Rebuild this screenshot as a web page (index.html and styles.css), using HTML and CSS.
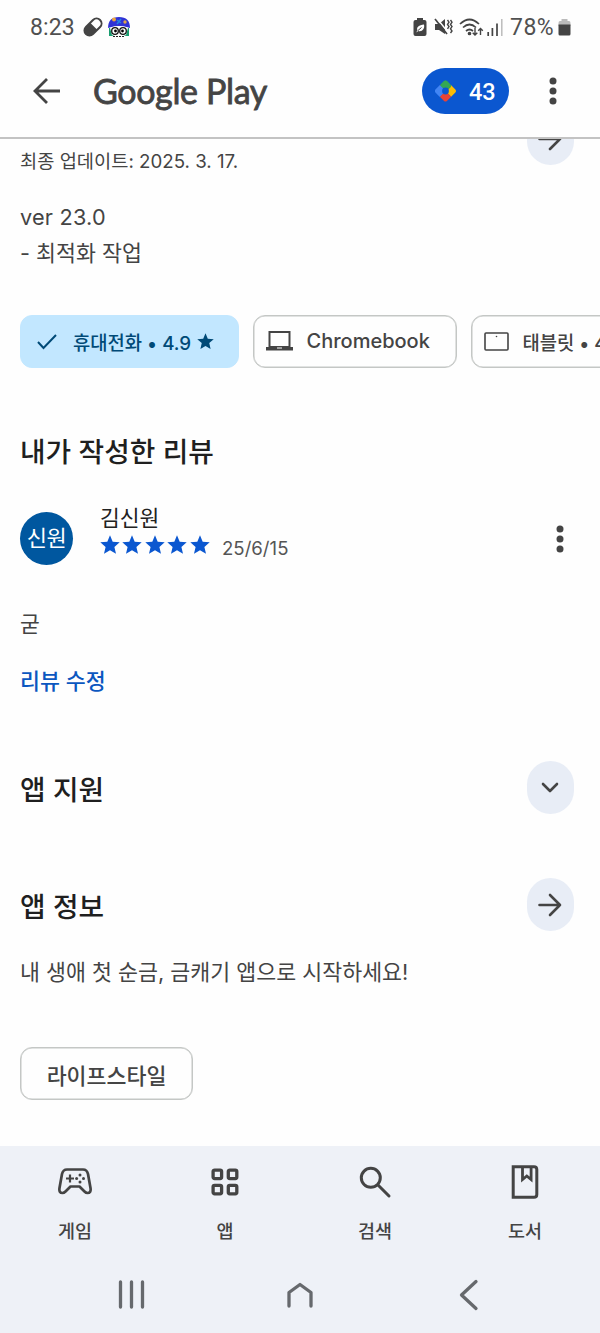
FILE: index.html
```html
<!DOCTYPE html>
<html lang="ko">
<head>
<meta charset="utf-8">
<title>Google Play</title>
<link rel="stylesheet" href="styles.css">
</head>
<body>
<svg width="0" height="0" class="defs">
  <symbol id="star" viewBox="0 0 20 20"><path d="M10 .2l2.700 6.500 7 .6-5.300 4.600 1.600 6.900L10 15.200l-6 3.600 1.600-6.900L.3 7.300l7-.6z"/></symbol>
</svg>
<div class="screen">
  <div class="status">
    <span class="time">8:23</span>
    <svg class="pill" width="22" height="22" viewBox="0 0 22 22"><g transform="rotate(45 11 11)"><rect x="6" y="1" width="10" height="20" rx="5" fill="#fff" stroke="#444" stroke-width="2"/><path d="M6 10h10v6a5 5 0 0 1-10 0z" fill="#444"/></g></svg>
    <svg class="face" width="24" height="22" viewBox="0 0 24 22"><path d="M2 12h20v8H2z" fill="#199d70"/><path d="M1 12Q1 1 12 1t11 11q-11-4-22 0z" fill="#3033d5"/><circle cx="7" cy="3.500" r="2" fill="#eca642"/><circle cx="18" cy="6" r="1.700" fill="#dda54b"/><path d="M10 4l4 3M14 3l-4 5" stroke="#2384e5" stroke-width="1.500"/><path d="M3 12q9-4 18 0l-2 7q-7 4-14 0z" fill="#fff"/><circle cx="8" cy="15" r="3.300" fill="#fff" stroke="#111" stroke-width="1.300"/><circle cx="16" cy="15" r="3.300" fill="#fff" stroke="#111" stroke-width="1.300"/><circle cx="8.500" cy="15" r="1.400"/><circle cx="15.500" cy="15" r="1.400"/><path d="M6 20.500h12" stroke="#222" stroke-dasharray="2 1"/></svg>
    <span class="grow"></span>
    <svg width="14" height="18" viewBox="0 0 14 18"><path d="M4 0h6v2h1.500q2 0 2 2v12q0 2-2 2h-9q-2 0-2-2V4q0-2 2-2H4z" fill="#444"/><path d="M3 14.500l1.500-2C3 9 6 7 11 6.500 12 11 9 14 5.500 13z" fill="#fff"/><path d="M5 12.500l3.500-3" stroke="#444"/></svg>
    <svg class="mute" width="19" height="19" viewBox="0 0 19 19"><path d="M1 6h4l6-5v15l-6-4H1z" fill="#444"/><path d="M2.500 0l13 16" stroke="#fff" stroke-width="1.500"/><path d="M1 1l12 15" stroke="#444" stroke-width="1.700"/><path d="M13.500 2l1.500 2.200-1.500 2.200L15 8.600l-1.500 2.200m3-8.800L18 4.200l-1.500 2.200L18 8.600l-1.500 2.200L18 13l-1.500 2" fill="none" stroke="#444" stroke-width="1.400"/></svg>
    <svg class="wifi" width="25" height="19" viewBox="0 0 25 19" fill="none" stroke="#444" stroke-width="1.700"><path d="M1 6q9.500-9 19 0M4 9.500q6.500-6 13 0M7 13q3.500-3 7 0"/><circle cx="10.500" cy="15.500" r="1" fill="#444"/><path d="M16 10v7m-2.300-2.300L16 17l2.300-2.300M21.500 17v-6.500m-2.300 2.300l2.300-2.300 2.300 2.300" stroke-width="1.400"/></svg>
    <svg class="signal" width="16" height="17" viewBox="0 0 16 17"><path d="M1.200 17v-4M5.400 17V9M10 17V4.500" stroke="#444" stroke-width="1.700"/><path d="M14.800 17V0" stroke="#bbb" stroke-width="1.500"/></svg>
    <span class="pct">78%</span>
    <svg width="13" height="17" viewBox="0 0 13 17"><path d="M3.500 0h6v2H11q1.500 0 1.500 2v3H.5V4Q.5 2 2 2h1.500z" fill="#bbb"/><path d="M.5 5.500h12V15q0 1.500-1.500 1.500H2Q.5 16.500.5 15z" fill="#444"/></svg>
  </div>
  <header class="header">
    <svg class="back" width="28" height="28" viewBox="0 0 28 28" fill="none" stroke="#444" stroke-width="2.800"><path d="M27 14H2M14 2L2 14l12 12"/></svg>
    <h1 class="brand">Google Play</h1>
    <span class="grow"></span>
    <div class="points">
      <svg width="23" height="24" viewBox="0 0 23 24"><g transform="translate(11.500 12) rotate(45)"><path d="M-8 0v-6q0-2 2-2h6v8z" fill="#34a853"/><path d="M0-8h6q2 0 2 2v6H0z" fill="#fbbc04"/><path d="M-8 0h8v8h-6q-2 0-2-2z" fill="#4285f4"/><path d="M0 0h8v6q0 2-2 2H0z" fill="#ea4335"/><path d="M-8 0v-6q0-2 2-2h6v8z" fill="#4285f4" transform="rotate(-90)"/><path d="M-8-1v-5q0-2 2-2h5q2 0 2 2v3h-6q-2 0-2 2z" fill="#34a853"/></g><circle cx="11.500" cy="12" r="3.400" fill="#0b57d0"/></svg>
      <span>43</span>
    </div>
    <svg class="more" width="8" height="28" viewBox="0 0 8 28" fill="#444"><circle cx="4" cy="4" r="3.500"/><circle cx="4" cy="14" r="3.500"/><circle cx="4" cy="24" r="3.500"/></svg>
  </header>
  <main class="content">
    <div class="updated">
      <p class="date">최종 업데이트: 2025. 3. 17.</p>
      <div class="round"><svg width="24" height="24" viewBox="0 0 24 24" class="arrow"><path d="M1.500 12H22M12 2l10 10-10 10"/></svg></div>
    </div>
    <div class="notes"><p class="ver">ver 23.0</p><p class="opt">- 최적화 작업</p></div>
    <div class="chips">
      <div class="chip selected"><svg width="20" height="16" viewBox="0 0 20 16" fill="none" stroke="#004a77" stroke-width="2"><path d="M1 8l5.500 6L19 1"/></svg><span class="phone">휴대전화 • 4.9</span><svg class="ministar" width="17" height="17" viewBox="0 0 20 20"><use href="#star" width="20" height="20"/></svg></div>
      <div class="chip chrome"><svg width="27" height="20" viewBox="0 0 27 20"><path d="M3.500 1h20v15h-20z" fill="none" stroke="#444" stroke-width="2"/><path d="M0 16h27v3.500H0z" fill="#444"/><path d="M11 17h5" stroke="#fff"/></svg><span>Chromebook</span></div>
      <div class="chip tablet"><svg width="25" height="19" viewBox="0 0 25 19"><rect x="1" y="1" width="23" height="17" rx="1" fill="none" stroke="#444" stroke-width="1.600"/><circle cx="12.500" cy="4.500" r=".8" fill="#444"/></svg><span>태블릿 • 4.7</span></div>
    </div>
    <h2 class="mine">내가 작성한 리뷰</h2>
    <div class="review">
      <div class="avatar">신원</div>
      <div class="who">
        <p class="name">김신원</p>
        <div class="rating"><svg width="20" height="20" viewBox="0 0 20 20"><use href="#star"/></svg><svg width="20" height="20" viewBox="0 0 20 20"><use href="#star"/></svg><svg width="20" height="20" viewBox="0 0 20 20"><use href="#star"/></svg><svg width="20" height="20" viewBox="0 0 20 20"><use href="#star"/></svg><svg width="20" height="20" viewBox="0 0 20 20"><use href="#star"/></svg><span>25/6/15</span></div>
      </div>
      <svg class="more" width="8" height="28" viewBox="0 0 8 28" fill="#444"><circle cx="4" cy="4" r="3.500"/><circle cx="4" cy="14" r="3.500"/><circle cx="4" cy="24" r="3.500"/></svg>
    </div>
    <p class="comment">굳</p>
    <a class="edit">리뷰 수정</a>
    <div class="section support"><h2>앱 지원</h2><div class="round"><svg width="18" height="12" viewBox="0 0 18 12" class="arrow"><path d="M2 2l7 7 7-7"/></svg></div></div>
    <div class="section about"><h2>앱 정보</h2><div class="round"><svg width="24" height="24" viewBox="0 0 24 24" class="arrow"><path d="M1.500 12H22M12 2l10 10-10 10"/></svg></div></div>
    <p class="desc">내 생애 첫 순금, 금캐기 앱으로 시작하세요!</p>
    <div class="chip tag">라이프스타일</div>
  </main>
  <footer class="bottom">
    <nav class="tabs">
      <div class="tab"><svg width="34" height="34" viewBox="0 0 34 34" fill="none" stroke="#444" stroke-width="2.700" stroke-linejoin="round"><path d="M9 4.500h16Q29 4.500 30 9l2.500 14q.8 5-3 5-1.500 0-3-1.500L21.500 21.500h-9l-5 5Q6 28 4.500 28q-3.800 0-3-5L4 9q1-4.500 5-4.500z"/><path d="M12 9.500v8M8 13.500h8" stroke-width="2.200"/><g fill="#444" stroke="none"><circle cx="22" cy="10" r="1.500"/><circle cx="22" cy="17" r="1.500"/><circle cx="18.600" cy="13.500" r="1.500"/><circle cx="25.500" cy="13.500" r="1.500"/></g></svg><span>게임</span></div>
      <div class="tab"><svg width="34" height="34" viewBox="0 0 34 34" fill="none" stroke="#444" stroke-width="3.300"><rect x="5.100" y="5.100" width="8.500" height="8.500" rx="1.500"/><rect x="20.300" y="5.100" width="8.500" height="8.500" rx="1.500"/><rect x="5.100" y="20.300" width="8.500" height="8.500" rx="1.500"/><rect x="20.300" y="20.300" width="8.500" height="8.500" rx="1.500"/></svg><span>앱</span></div>
      <div class="tab"><svg width="34" height="34" viewBox="0 0 34 34" fill="none" stroke="#444" stroke-width="3" stroke-linecap="round"><circle cx="12.800" cy="12.800" r="9.500"/><path d="M20 20l11 11"/></svg><span>검색</span></div>
      <div class="tab"><svg width="34" height="34" viewBox="0 0 34 34" fill="none" stroke="#444" stroke-width="3"><path d="M5.200 1.800H26q2.800 0 2.800 2.800v24.800q0 2.800-2.800 2.800H5.200z"/><path d="M14.500 2v12.500l4.300-3.500 4.300 3.500V2" stroke-width="2.800"/></svg><span>도서</span></div>
    </nav>
    <div class="system">
      <svg width="28" height="32" viewBox="0 0 28 32"><path d="M2.500 3v25M13.500 3v25M24.500 3v25"/></svg>
      <svg width="28" height="32" viewBox="0 0 28 32"><path d="M3 27V13.500L14 5.500l11 8V27"/></svg>
      <svg width="28" height="32" viewBox="0 0 28 32"><path d="M22 2.500L7.500 16 22 29.500"/></svg>
    </div>
  </footer>
</div>
</body>
</html>
```
FILE: styles.css
```css
* { box-sizing: border-box; }
body { margin: 0; background: #fefefe; color: #444; font-family: Inter, "Noto Sans CJK KR", sans-serif; }
p, h1, h2 { margin: 0; font-weight: 400; white-space: nowrap; }
svg { display: block; flex: none; }
.defs { display: none; }
.grow { flex: 1; }
.screen { width: 600px; height: 1333px; display: flex; flex-direction: column; overflow: hidden; }
.status { height: 54px; display: flex; align-items: center; padding: 0 29px 0 30px; font-family: Roboto, sans-serif; font-size: 23px; color: #505050; }
.status .pill { margin-left: 7px; }
.status .face { margin-left: 3px; }
.time { letter-spacing: 0.1px; }
.mute { margin-left: 7px; }
.wifi { margin-left: 6px; }
.signal { margin-left: 3px; }
.pct { margin: 0 4px 0 7px; letter-spacing: 0.4px; }
.header { height: 85px; flex: none; display: flex; align-items: center; padding: 0 43px 9px 33px; border-bottom: 2px solid #c3c3c3; }
.brand { margin-left: 32px; font: 400 34px/44px Lato, sans-serif; letter-spacing: -0.35px; -webkit-text-stroke: 0.8px #444; }
.points { width: 87px; height: 46px; border-radius: 23px; background: #0b57d0; color: #fff; display: flex; align-items: center; padding-left: 12px; gap: 12px; font: 500 23.5px/46px Roboto, sans-serif; }
.points span { padding-top: 1px; }
.header .more { margin-left: 40px; }
.content { flex: 1; padding: 0 26.5px 0 20px; }
.updated { height: 38px; display: flex; justify-content: space-between; align-items: flex-start; overflow: hidden; }
.date { font-size: 18.7px; line-height: 30px; margin-top: 8px; }
.round { width: 47px; height: 53px; border-radius: 23.5px; background: #e8edf6; display: flex; align-items: center; justify-content: center; flex: none; }
.updated .round { margin-top: -27px; }
.arrow { fill: none; stroke: #444; stroke-width: 2.6; stroke-linecap: round; stroke-linejoin: round; }
.notes { margin-top: 22px; font-size: 21.7px; line-height: 36px; }
.ver { letter-spacing: 0.2px; }
.chips { margin: 44px -26.5px 0 0; display: flex; gap: 14px; overflow: hidden; }
.chip { height: 53px; border: 1.6px solid #c4c7c5; box-shadow: inset 0 0 0 0.5px #c4c7c5; border-radius: 12px; display: flex; align-items: center; flex: none; white-space: nowrap; font-size: 20px; font-weight: 500; }
.selected { width: 218.5px; background: #c2e7ff; border-color: #c2e7ff; box-shadow: none; color: #004a77; padding-left: 16px; font-size: 18.8px; }
.phone { margin-left: 16px; }
.ministar { margin-left: 6px; fill: #004a77; }
.chrome { width: 204px; padding-left: 12px; gap: 14px; padding-bottom: 2px; }
.tablet { width: 210px; padding-left: 12px; gap: 14px; font-size: 18.8px; }
h2 { font-size: 27.8px; line-height: 40px; font-weight: 500; color: #1f1f1f; }
.mine { margin-top: 64px; }
.review { margin-top: 40px; height: 53px; display: flex; align-items: center; padding-right: 9.5px; }
.avatar { width: 53px; height: 53px; border-radius: 50%; background: #00579f; color: #fff; text-align: center; font-size: 22px; line-height: 52px; letter-spacing: -0.5px; }
.who { margin-left: 27px; flex: 1; padding-bottom: 15px; }
.name { font-size: 21.5px; line-height: 28px; color: #222; }
.rating { display: flex; align-items: center; height: 27px; gap: 2.5px; fill: #0b57d0; margin-left: -0.5px; }
.rating span { margin: 6px 0 0 10px; font-size: 18.6px; color: #555; }
.comment { margin-top: 44px; font-size: 21.5px; line-height: 30px; }
.edit { display: block; margin-top: 27px; font-size: 21.7px; line-height: 30px; font-weight: 500; color: #0b57c0; }
.section { display: flex; align-items: center; justify-content: space-between; height: 53px; }
.section h2 { padding-top: 5px; }
.support { margin-top: 65px; }
.about { margin-top: 64px; }
.desc { margin-top: 26px; font-size: 21.7px; line-height: 30px; }
.tag { margin-top: 60px; width: 173px; justify-content: center; font-size: 21.7px; padding-top: 2px; }
.bottom { height: 187px; background: #eef1f7; flex: none; }
.tabs { display: flex; height: 110px; }
.tab { width: 150px; padding-top: 19px; display: flex; flex-direction: column; align-items: center; gap: 18px; font-size: 18.5px; line-height: 28px; font-weight: 500; }
.system { display: flex; justify-content: space-between; padding: 23px 118px 0; }
.system svg { fill: none; stroke: #66696d; stroke-width: 3.3; stroke-linecap: round; stroke-linejoin: round; }
```
